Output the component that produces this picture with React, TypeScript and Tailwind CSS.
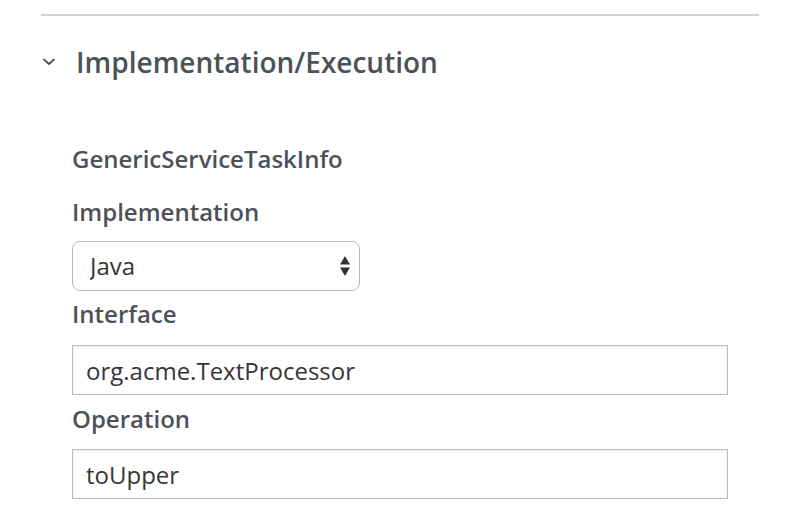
import { useState } from 'react'

export default function App() {
  const [impl, setImpl] = useState('Java')
  const [iface, setIface] = useState('org.acme.TextProcessor')
  const [op, setOp] = useState('toUpper')

  return (
    <div className="w-[798px] h-[522px] bg-white overflow-hidden" style={{ fontFamily: '"Open Sans", "Noto Sans", sans-serif' }}>
      <div className="pt-[14px] pl-[41px]">
        {/* Divider */}
        <div className="w-[718px] h-[2px] bg-[#d2d2d2]" />

        {/* Section header */}
        <div className="flex items-center mt-[26px] h-[40px]">
          <svg className="w-[14px] h-[10px] ml-[1px] text-[#4d5258]" viewBox="0 0 14 10" fill="none">
            <path d="M2 2.5l5 4.5 5-4.5" stroke="currentColor" strokeWidth={1.8} strokeLinecap="round" strokeLinejoin="round" />
          </svg>
          <h2 className="ml-[20px] text-[28px] leading-[40px] font-semibold text-[#4d5258]">Implementation/Execution</h2>
        </div>

        {/* Fields */}
        <div className="pl-[31px] flex flex-col">
          <div className="mt-[62px] text-[24px] leading-[30px] font-semibold text-[#4d5258]">GenericServiceTaskInfo</div>

          <label className="mt-[23px] text-[24px] leading-[30px] font-semibold text-[#4d5258]">Implementation</label>
          <div className="relative mt-[14px] w-[288px] h-[50px]">
            <select
              value={impl}
              onChange={(e) => setImpl(e.target.value)}
              className="appearance-none w-full h-full rounded-[8px] border border-[#bbbbbb] bg-white pl-[17px] text-[24px] text-[#363636] outline-none"
            >
              <option>Java</option>
              <option>WebService</option>
            </select>
            <svg className="absolute left-[267px] top-[14px] w-[12px] h-[22px] pointer-events-none" viewBox="0 0 12 22">
              <path d="M6 1L11 9.5H1z" fill="#333" />
              <path d="M6 21L11 12.5H1z" fill="#333" />
            </svg>
          </div>

          <label className="mt-[8px] text-[24px] leading-[30px] font-semibold text-[#4d5258]">Interface</label>
          <input
            value={iface}
            onChange={(e) => setIface(e.target.value)}
            className="mt-[16px] w-[656px] h-[50px] border border-[#bbbbbb] bg-white px-[13px] text-[24px] text-[#363636] outline-none shadow-[inset_0_1px_2px_rgba(0,0,0,0.08)]"
          />

          <label className="mt-[9px] text-[24px] leading-[30px] font-semibold text-[#4d5258]">Operation</label>
          <input
            value={op}
            onChange={(e) => setOp(e.target.value)}
            className="mt-[15px] w-[656px] h-[50px] border border-[#bbbbbb] bg-white px-[13px] text-[24px] text-[#363636] outline-none shadow-[inset_0_1px_2px_rgba(0,0,0,0.08)]"
          />
        </div>
      </div>
    </div>
  )
}
